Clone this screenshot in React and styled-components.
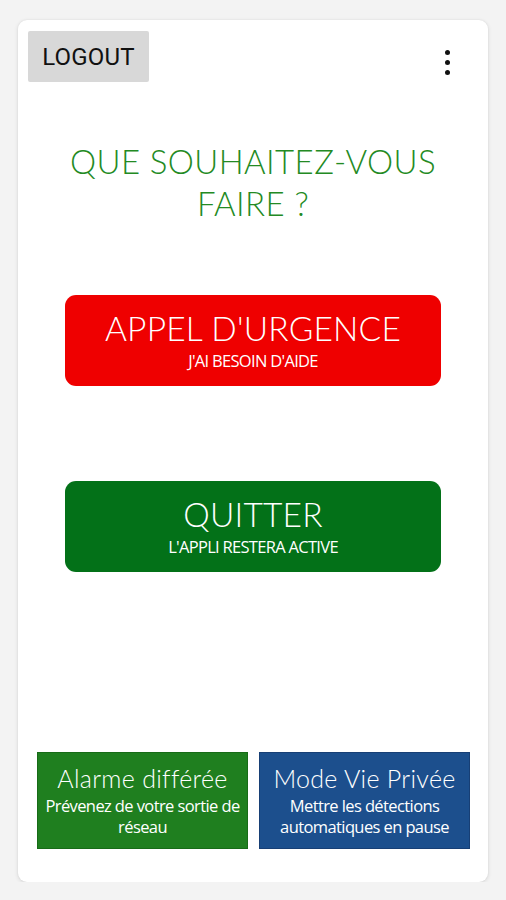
import React from "react";
import styled, { createGlobalStyle } from "styled-components";

const Global = createGlobalStyle`
  html, body { margin: 0; padding: 0; background: #f3f3f3; }
  body { font-family: Lato, "Open Sans", sans-serif; }
  * { box-sizing: border-box; }
`;

const Card = styled.div`
  margin: 20px 18px 0 18px;
  height: 862px;
  background: #ffffff;
  border-radius: 9px;
  box-shadow: 0 1px 4px rgba(0, 0, 0, 0.12), 0 0 2px rgba(0, 0, 0, 0.06);
  display: flex;
  flex-direction: column;
  padding: 11px 0 33px 0;
`;

const TopBar = styled.div`
  display: flex;
  justify-content: space-between;
  align-items: flex-start;
  padding: 0 38px 0 10px;
`;

const LogoutButton = styled.button`
  width: 121px;
  height: 51px;
  border: none;
  border-radius: 2px;
  background: #d8d8d8;
  color: #111;
  font-family: Roboto, "Liberation Sans", sans-serif;
  font-size: 24px;
  letter-spacing: 0.2px;
  padding: 0;
`;

const Kebab = styled.div`
  display: flex;
  flex-direction: column;
  gap: 5px;
  margin-top: 19px;
`;

const Dot = styled.span`
  width: 5px;
  height: 5px;
  border-radius: 50%;
  background: #111;
`;

const Title = styled.h1`
  margin: 58px 0 0 0;
  text-align: center;
  color: #238a23;
  font-family: Lato, sans-serif;
  font-weight: 300;
  font-size: 33px;
  line-height: 42px;
  letter-spacing: 0.4px;
  padding: 0 40px;
`;

const ActionButton = styled.button`
  margin: ${(p) => p.$top}px 47px 0 47px;
  height: 91px;
  border: none;
  border-radius: 11px;
  background: ${(p) => p.$bg};
  color: #fff;
  display: flex;
  flex-direction: column;
  align-items: center;
  justify-content: center;
  padding: 0 0 2px 0;
`;

const ActionTitle = styled.span`
  font-family: Lato, sans-serif;
  font-weight: 300;
  font-size: 33.5px;
  line-height: 40px;
  letter-spacing: 0.2px;
`;

const ActionSub = styled.span`
  font-family: "Open Sans", sans-serif;
  font-size: 16.5px;
  line-height: 20px;
  letter-spacing: -0.7px;
  margin-top: 3px;
`;

const Spacer = styled.div`
  flex: 1;
`;

const BottomRow = styled.div`
  display: grid;
  grid-template-columns: 211px 211px;
  gap: 11px;
  padding: 0 0 0 19px;
`;

const Tile = styled.button`
  height: 97px;
  border: 1px solid ${(p) => p.$border};
  border-radius: 0;
  background: ${(p) => p.$bg};
  color: #fff;
  display: flex;
  flex-direction: column;
  align-items: center;
  justify-content: flex-start;
  padding: 10px 0 0 0;
`;

const TileTitle = styled.span`
  font-family: Lato, sans-serif;
  font-weight: 300;
  font-size: 25px;
  line-height: 30px;
  letter-spacing: 0.3px;
`;

const TileSub = styled.span`
  font-family: "Open Sans", sans-serif;
  font-size: 16.5px;
  line-height: 21px;
  letter-spacing: -0.6px;
  margin-top: 2px;
  text-align: center;
`;

export default function App() {
  return (
    <>
      <Global />
      <Card>
        <TopBar>
          <LogoutButton>LOGOUT</LogoutButton>
          <Kebab>
            <Dot />
            <Dot />
            <Dot />
          </Kebab>
        </TopBar>
        <Title>
          QUE SOUHAITEZ-VOUS
          <br />
          FAIRE ?
        </Title>
        <ActionButton $top={71} $bg="#ef0000">
          <ActionTitle>APPEL D'URGENCE</ActionTitle>
          <ActionSub>J'AI BESOIN D'AIDE</ActionSub>
        </ActionButton>
        <ActionButton $top={95} $bg="#037118">
          <ActionTitle>QUITTER</ActionTitle>
          <ActionSub>L'APPLI RESTERA ACTIVE</ActionSub>
        </ActionButton>
        <Spacer />
        <BottomRow>
          <Tile $bg="#1f7f1f" $border="#176b17">
            <TileTitle>Alarme différée</TileTitle>
            <TileSub>Prévenez de votre sortie de réseau</TileSub>
          </Tile>
          <Tile $bg="#1c4f8d" $border="#173f75">
            <TileTitle>Mode Vie Privée</TileTitle>
            <TileSub>Mettre les détections automatiques en pause</TileSub>
          </Tile>
        </BottomRow>
      </Card>
    </>
  );
}
